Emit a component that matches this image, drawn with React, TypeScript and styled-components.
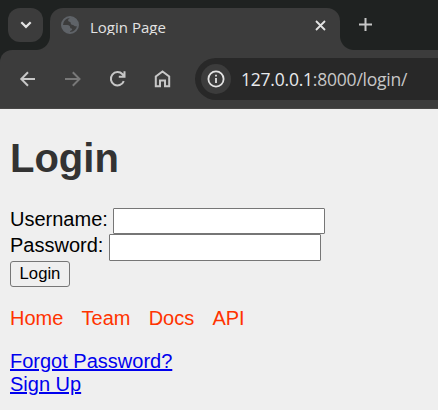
import React from 'react';
import styled, { createGlobalStyle } from 'styled-components';

const GlobalStyle = createGlobalStyle`
  * { box-sizing: border-box; }
  body { margin: 0; background: #efefef; }
`;

const Window = styled.div`
  width: 438px;
  height: 410px;
  overflow: hidden;
  background: #efefef;
  font-family: 'Liberation Sans', Arial, sans-serif;
`;

const TabStrip = styled.div`
  display: flex;
  align-items: flex-start;
  height: 50px;
  padding: 8px 0 0 8px;
  background: #1f2221;
`;

const TabSearch = styled.button`
  display: grid;
  place-items: center;
  width: 35px;
  height: 34px;
  padding: 0;
  border: 0;
  border-radius: 12px;
  background: #3c3c3c;
`;

const Tab = styled.div`
  position: relative;
  display: flex;
  align-items: flex-start;
  width: 290px;
  height: 42px;
  margin-left: 7px;
  padding: 8px 13.5px 0 11px;
  border-radius: 13px 13px 0 0;
  background: #3c3c3c;

  &::before,
  &::after {
    content: '';
    position: absolute;
    bottom: 0;
    width: 14px;
    height: 14px;
  }
  &::before {
    left: -14px;
    background: radial-gradient(circle at 0 0, transparent 13.5px, #3c3c3c 14.5px);
  }
  &::after {
    right: -14px;
    background: radial-gradient(circle at 100% 0, transparent 13.5px, #3c3c3c 14.5px);
  }
`;

const TabTitle = styled.span`
  flex: 1;
  height: 19px;
  margin-left: 11px;
  overflow: hidden;
  color: #e3e3e3;
  font: 15px/23px 'Open Sans', 'Noto Sans', sans-serif;
  white-space: nowrap;
`;

const NewTab = styled.div`
  margin: 9px 0 0 18px;
  line-height: 0;
`;

const CloseTab = styled.div`
  line-height: 0;
  padding-top: 3px;
`;

const ToolbarBack = styled.div`
  background: #1f2221;
`;

const Toolbar = styled.div`
  display: flex;
  align-items: center;
  height: 59px;
  padding-left: 17px;
  border-radius: 12px 0 0 0;
  border-bottom: 1px solid #484746;
  background: #3c3c3c;
`;

const NavIcon = styled.div<{ $dim?: boolean }>`
  width: 22px;
  height: 22px;
  margin-right: 23px;
  color: ${(p) => (p.$dim ? '#787878' : '#c7c7c7')};
`;

const AddressBar = styled.div`
  display: flex;
  align-items: center;
  width: 243px;
  height: 42px;
  margin-left: -2px;
  padding-left: 6px;
  border-radius: 21px 0 0 21px;
  background: #282828;
`;

const SiteInfo = styled.div`
  display: grid;
  place-items: center;
  width: 30px;
  height: 30px;
  border-radius: 50%;
  background: #3c3c3c;
`;

const Url = styled.span`
  margin-left: 10px;
  color: #c7c7c7;
  font: 17.5px/24px 'Open Sans', 'Noto Sans', sans-serif;
  letter-spacing: -0.22px;
  white-space: nowrap;
`;

const Host = styled.span`
  color: #e8eaed;
`;

const Page = styled.main`
  padding: 26px 10px 0;
  color: #000;
  font-size: 20px;
  line-height: 23px;
`;

const Heading = styled.h1`
  margin: 0 0 27px;
  color: #333;
  font-size: 40px;
  line-height: 46px;
`;

const Field = styled.label<{ $height: number }>`
  display: flex;
  align-items: flex-start;
  height: ${(p) => p.$height}px;
  white-space: pre;
`;

const TextInput = styled.input`
  width: 212px;
  height: 100%;
  margin: 0;
  padding: 1px 2px;
  border: 1px solid #767676;
  border-radius: 1px;
  background: #fff;
`;

const SubmitButton = styled.button`
  display: block;
  width: 60px;
  height: 26px;
  padding: 0;
  border: 1px solid #767676;
  border-radius: 3px;
  background: #efefef;
  color: #000;
  font: 16.67px/22px 'Liberation Sans', Arial, sans-serif;
`;

const Menu = styled.nav`
  display: flex;
  gap: 18.2px;
  margin-top: 20px;
`;

const MenuLink = styled.a`
  color: #ff3300;
  text-decoration: none;
`;

const AccountLinks = styled.div`
  display: flex;
  flex-direction: column;
  align-items: flex-start;
  margin-top: 20px;
`;

const AccountLink = styled.a`
  color: #0000ee;
  text-decoration: underline;
`;

const Stroke = ({ d, size = 22, width = 2 }: { d: string; size?: number; width?: number }) => (
  <svg width={size} height={size} viewBox={`0 0 ${size} ${size}`} fill="none" stroke="currentColor" strokeWidth={width}>
    <path d={d} />
  </svg>
);

export default function App() {
  return (
    <>
      <GlobalStyle />
      <Window>
        <TabStrip>
          <TabSearch aria-label="Search tabs">
            <svg width="12" height="12" viewBox="0 0 12 12" fill="none" stroke="#e3e3e3" strokeWidth="2.2">
              <path d="M1.3 3.2 6 7.9l4.7-4.7" />
            </svg>
          </TabSearch>
          <Tab>
            <svg width="18" height="18" viewBox="0 0 18 18" fill="#5f6368">
              <circle cx="9" cy="9" r="8" fill="none" stroke="#5f6368" strokeWidth="2" />
              <path d="M9.3 1c-.2 1.3-1.7 1.6-2.1 2.8-.3 1 .3 1.9 1.3 2 .9.1 1.2.7 1.2 1.5 0 1.2 1 1.7 2.2 1.7.9 0 1.2.9 2.1 1.2 1.1.3 2 .1 3-.5V7L14 3Z" />
              <path d="M1 9h5.3c1.7 0 2.9 1 2.9 2.4 0 .8.5 1 1.3 1.1.8.1.9 1 .3 1.6-.7.7-1.7.8-1.8 1.7V17L5 16l-3-3Z" />
            </svg>
            <TabTitle>Login Page</TabTitle>
            <CloseTab>
              <svg width="13" height="13" viewBox="0 0 13 13" stroke="#e3e3e3" strokeWidth="1.8">
                <path d="m2 2 9 9M11 2l-9 9" />
              </svg>
            </CloseTab>
          </Tab>
          <NewTab>
            <svg width="15" height="15" viewBox="0 0 15 15" stroke="#c7c7c7" strokeWidth="2">
              <path d="M7.5 1v13M1 7.5h13" />
            </svg>
          </NewTab>
        </TabStrip>
        <ToolbarBack>
          <Toolbar>
            <NavIcon><Stroke d="M18 11H4.5M11 4.3 4.3 11l6.7 6.7" /></NavIcon>
            <NavIcon $dim><Stroke d="M3 11h14M10.8 4.3 17.5 11l-6.7 6.7" /></NavIcon>
            <NavIcon><Stroke d="M16.8 13.2a6.7 6.7 0 1 1-1.3-7l2.1 2.3M17.5 3.2v5.5h-5.7" /></NavIcon>
            <NavIcon><Stroke d="M3.8 18.2V8.5L10.5 3.4l6.7 5.1v9.7h-4.2v-5.6H8v5.6Z" /></NavIcon>
            <AddressBar>
              <SiteInfo>
                <svg width="18" height="18" viewBox="0 0 18 18" fill="none" stroke="#e3e3e3" strokeWidth="1.8">
                  <circle cx="9" cy="9" r="7.6" />
                  <path d="M9 8v5M9 4.8v1.8" />
                </svg>
              </SiteInfo>
              <Url><Host>127.0.0.1</Host>:8000/login/</Url>
            </AddressBar>
          </Toolbar>
        </ToolbarBack>
        <Page>
          <Heading>Login</Heading>
          <form>
            <Field $height={26}>Username: <TextInput type="text" /></Field>
            <Field $height={27}>Password: <TextInput type="password" /></Field>
            <SubmitButton type="button">Login</SubmitButton>
          </form>
          <Menu>
            <MenuLink>Home</MenuLink>
            <MenuLink>Team</MenuLink>
            <MenuLink>Docs</MenuLink>
            <MenuLink>API</MenuLink>
          </Menu>
          <AccountLinks>
            <AccountLink>Forgot Password?</AccountLink>
            <AccountLink>Sign Up</AccountLink>
          </AccountLinks>
        </Page>
      </Window>
    </>
  );
}
